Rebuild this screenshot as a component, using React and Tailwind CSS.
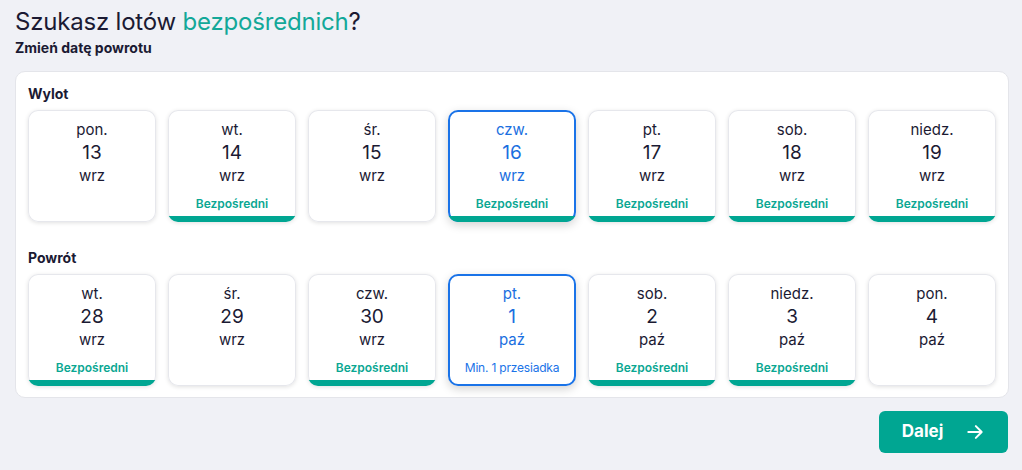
import React from "react";

const wylot = [
  { d: "pon.", n: "13", m: "wrz", s: null },
  { d: "wt.", n: "14", m: "wrz", s: "direct" },
  { d: "śr.", n: "15", m: "wrz", s: null },
  { d: "czw.", n: "16", m: "wrz", s: "direct", sel: true },
  { d: "pt.", n: "17", m: "wrz", s: "direct" },
  { d: "sob.", n: "18", m: "wrz", s: "direct" },
  { d: "niedz.", n: "19", m: "wrz", s: "direct" },
];

const powrot = [
  { d: "wt.", n: "28", m: "wrz", s: "direct" },
  { d: "śr.", n: "29", m: "wrz", s: null },
  { d: "czw.", n: "30", m: "wrz", s: "direct" },
  { d: "pt.", n: "1", m: "paź", s: "stop", sel: true },
  { d: "sob.", n: "2", m: "paź", s: "direct" },
  { d: "niedz.", n: "3", m: "paź", s: "direct" },
  { d: "pon.", n: "4", m: "paź", s: null },
];

function Card({ c }) {
  const direct = c.s === "direct";
  const txt = c.sel ? "text-[#1a6fe0]" : "text-[#1b1a33]";
  return (
    <div
      className={`relative h-[112px] rounded-[10px] bg-white overflow-hidden flex flex-col items-center ${
        c.sel
          ? "shadow-[inset_0_0_0_2px_#1a73e8,0_3px_10px_rgba(0,0,0,0.18)]"
          : "shadow-[inset_0_0_0_1px_#e6e7ec,0_1px_4px_rgba(0,0,0,0.12)]"
      }`}
    >
      <div className={`flex flex-col items-center pt-[10px] ${txt}`}>
        <div className="text-[15px] leading-[20px]">{c.d}</div>
        <div className="text-[19px] leading-[24px] mt-[1px]">{c.n}</div>
        <div className="text-[15px] leading-[20px] mt-[1px]">{c.m}</div>
      </div>
      {c.s === "direct" && (
        <div className="mt-[10px] text-[12px] leading-[16px] font-semibold text-[#0aa792]">Bezpośredni</div>
      )}
      {c.s === "stop" && (
        <div className="mt-[10px] text-[12px] leading-[16px] text-[#1a73e8] tracking-[-0.2px]">Min. 1 przesiadka</div>
      )}
      {direct && <div className="absolute left-0 right-0 bottom-0 h-[6px] bg-[#00a692]" />}
    </div>
  );
}

export default function App() {
  return (
    <div
      className="w-[1022px] h-[470px] bg-[#f0f1f6] text-[#1b1a33] pl-[15px] pr-[13px] pt-[6px]"
      style={{ fontFamily: "Inter, 'Noto Sans', sans-serif" }}
    >
      <h1 className="text-[24px] leading-[32px] tracking-[-0.2px]">
        Szukasz lotów <span className="text-[#13a899]">bezpośrednich</span>?
      </h1>
      <div className="text-[14px] leading-[18px] font-bold mt-[1px]">Zmień datę powrotu</div>
      <div className="mt-[14px] bg-white rounded-[10px] border border-[#e4e5ea] px-[12px] pt-[12px] pb-[11px]">
        <div className="text-[14px] leading-[20px] font-bold mb-[6px]">Wylot</div>
        <div className="grid grid-cols-7 gap-[12px]">
          {wylot.map((c, i) => (
            <Card key={i} c={c} />
          ))}
        </div>
        <div className="text-[14px] leading-[20px] font-bold mt-[26px] mb-[6px]">Powrót</div>
        <div className="grid grid-cols-7 gap-[12px]">
          {powrot.map((c, i) => (
            <Card key={i} c={c} />
          ))}
        </div>
      </div>
      <div className="flex justify-end mt-[13px] pr-[1px]">
        <button className="w-[129px] h-[42px] rounded-[6px] bg-[#00a692] text-white flex items-center justify-center gap-[22px] text-[17px] font-bold">
          <span>Dalej</span>
          <svg width="20" height="20" viewBox="0 0 24 24" fill="none" stroke="white" strokeWidth="2.4" strokeLinecap="round" strokeLinejoin="round">
            <path d="M4 12h15" />
            <path d="M13 5l7 7-7 7" />
          </svg>
        </button>
      </div>
    </div>
  );
}
